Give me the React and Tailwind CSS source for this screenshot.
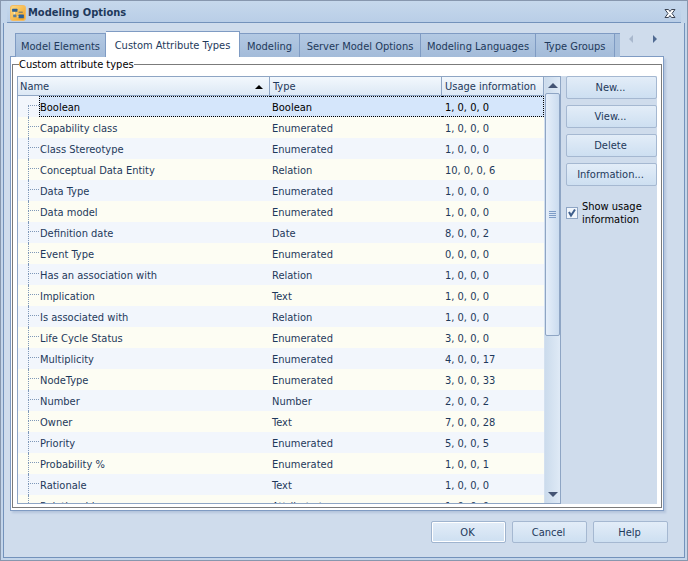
import { useState } from 'react';
import clsx from 'clsx';

const TABS = [
  { label: 'Model Elements', width: 'w-[91px]' },
  { label: 'Custom Attribute Types', width: 'w-[134px]' },
  { label: 'Modeling', width: 'w-[60px]' },
  { label: 'Server Model Options', width: 'w-[121px]' },
  { label: 'Modeling Languages', width: 'w-[115px]' },
  { label: 'Type Groups', width: 'w-[79px]' },
];

const ATTRIBUTES = [
  ['Boolean', 'Boolean', '1, 0, 0, 0'],
  ['Capability class', 'Enumerated', '1, 0, 0, 0'],
  ['Class Stereotype', 'Enumerated', '1, 0, 0, 0'],
  ['Conceptual Data Entity', 'Relation', '10, 0, 0, 6'],
  ['Data Type', 'Enumerated', '1, 0, 0, 0'],
  ['Data model', 'Enumerated', '1, 0, 0, 0'],
  ['Definition date', 'Date', '8, 0, 0, 2'],
  ['Event Type', 'Enumerated', '0, 0, 0, 0'],
  ['Has an association with', 'Relation', '1, 0, 0, 0'],
  ['Implication', 'Text', '1, 0, 0, 0'],
  ['Is associated with', 'Relation', '1, 0, 0, 0'],
  ['Life Cycle Status', 'Enumerated', '3, 0, 0, 0'],
  ['Multiplicity', 'Enumerated', '4, 0, 0, 17'],
  ['NodeType', 'Enumerated', '3, 0, 0, 33'],
  ['Number', 'Number', '2, 0, 0, 2'],
  ['Owner', 'Text', '7, 0, 0, 28'],
  ['Priority', 'Enumerated', '5, 0, 0, 5'],
  ['Probability %', 'Enumerated', '1, 0, 0, 1'],
  ['Rationale', 'Text', '1, 0, 0, 0'],
  ['Relationship', 'Attribute type', '1, 0, 0, 0'],
];

function AppIcon() {
  return (
    <svg width="16" height="16" viewBox="0 0 15 15" className="shrink-0">
      <defs>
        <linearGradient id="appIcon" x1="0" y1="0" x2="1" y2="1">
          <stop offset="0" stopColor="#fbdc8c" />
          <stop offset="1" stopColor="#f2a01c" />
        </linearGradient>
      </defs>
      <rect x="0.5" y="0.5" width="14" height="14" rx="2.5" fill="url(#appIcon)" stroke="#f3bb62" />
      <path d="M4 6v5M7 11h3" stroke="#fff0c0" strokeWidth="1" fill="none" />
      <rect x="2" y="3.4" width="5" height="3" rx="0.5" fill="#2d5f94" />
      <rect x="3" y="9" width="3" height="2.4" rx="0.5" fill="#5b7d99" />
      <rect x="8" y="6" width="4" height="1.6" rx="0.5" fill="#8b8566" />
      <rect x="8" y="9" width="5" height="3.4" rx="0.5" fill="#2d5f94" />
    </svg>
  );
}

function Arrow({ dir, color, small }) {
  const paths = {
    up: 'M0 5L5 0L10 5Z',
    down: 'M0 0L5 5L10 0Z',
    left: 'M5 0L0 5L5 10Z',
    right: 'M0 0L5 5L0 10Z',
  };
  const flat = dir === 'up' || dir === 'down';
  const scale = small ? 0.8 : 1;
  return (
    <svg
      width={(flat ? 10 : 5) * scale}
      height={(flat ? 5 : 10) * scale}
      viewBox={flat ? '0 0 10 5' : '0 0 5 10'}
      className="shrink-0"
    >
      <path d={paths[dir]} fill={color} />
    </svg>
  );
}

function DialogButton({ children, className, primary }) {
  return (
    <button
      type="button"
      className={clsx(
        'flex items-center justify-center rounded-[2px] border bg-linear-to-b from-[#e3edf8] to-[#cddff1] pr-[2px] text-[#1e395b]',
        primary ? 'border-[#9fb4cf] shadow-[inset_0_0_0_1px_#ffffff]' : 'border-[#a5b8d1]',
        className
      )}
    >
      {children}
    </button>
  );
}

function TreeBranch({ first }) {
  return (
    <span className="ml-[10px] flex h-[21px] w-[11px] shrink-0 flex-col">
      <span className={clsx('h-[10px] border-b border-dotted border-[#7f98b8]', !first && 'border-l')} />
      <span className="flex-1 border-l border-dotted border-[#7f98b8]" />
    </span>
  );
}

function AttributeTable({ selected, onSelect }) {
  const head = 'border-b border-[#8ea5c4] bg-linear-to-b from-[#f3f8fd] to-[#dce8f5] p-0 pt-px text-left font-normal';
  return (
    <table className="w-full table-fixed border-separate border-spacing-0 text-[#1e395b]">
      <thead>
        <tr className="h-[19px]">
          <th className={clsx(head, 'border-r pl-[2px]')}>
            <span className="flex items-center justify-between pr-[6px]">
              Name
              <Arrow dir="up" color="#000000" small />
            </span>
          </th>
          <th className={clsx(head, 'w-[172px] border-r pl-[3px]')}>Type</th>
          <th className={clsx(head, 'w-[102px] border-r pl-[3px]')}>Usage information</th>
        </tr>
      </thead>
      <tbody>
        {ATTRIBUTES.map(([name, type, usage], i) => {
          const active = i === selected;
          const cell = active
            ? 'border-y border-dotted border-black bg-[#d5e6fb] text-black'
            : 'border-y border-transparent';
          return (
            <tr
              key={name}
              onClick={() => onSelect(i)}
              className={clsx('h-[21px]', i % 2 ? 'bg-[#fdfdf3]' : 'bg-[#f2f6fc]')}
            >
              <td className="p-0">
                <div className="flex h-[21px]">
                  <TreeBranch first={i === 0} />
                  <span className={clsx('flex flex-1 items-center pt-px', cell, active ? 'border-l' : 'pl-px')}>
                    {name}
                  </span>
                </div>
              </td>
              <td className={clsx('p-0 pt-px pl-[2px]', cell)}>{type}</td>
              <td className={clsx('p-0 pt-px pl-[3px]', cell, active && 'border-r')}>{usage}</td>
            </tr>
          );
        })}
      </tbody>
    </table>
  );
}

function Scrollbar() {
  return (
    <div className="flex w-4 shrink-0 flex-col border-l border-[#d3e0ef] bg-linear-to-r from-[#cbdbec] to-[#dfeaf6]">
      <button type="button" aria-label="Scroll up" className="flex h-4 items-center justify-center">
        <Arrow dir="up" color="#445474" />
      </button>
      <div className="flex h-[57%] items-center justify-center rounded-[2px] border border-[#8ea5c4] bg-linear-to-r from-[#e6effa] to-[#cbdcef]">
        <span className="flex w-[7px] flex-col gap-px">
          <span className="h-px bg-[#7d9cc6]" />
          <span className="h-px bg-[#7d9cc6]" />
          <span className="h-px bg-[#7d9cc6]" />
          <span className="h-px bg-[#7d9cc6]" />
        </span>
      </div>
      <div className="flex-1" />
      <button type="button" aria-label="Scroll down" className="flex h-[18px] items-center justify-center">
        <Arrow dir="down" color="#445474" />
      </button>
    </div>
  );
}

export default function App() {
  const [tab, setTab] = useState(1);
  const [selected, setSelected] = useState(0);
  const [showUsage, setShowUsage] = useState(true);

  return (
    <div className="flex h-screen flex-col border border-[#8797ae] bg-[#c3d5ea] px-[2px] pb-[2px] font-['DejaVu_Sans_Condensed','Noto_Sans',sans-serif] text-[11px] leading-[13px] whitespace-nowrap">
      <header className="mx-1 flex h-[22px] shrink-0 items-center border-b border-[#7392bb] bg-linear-to-b from-[#c6d8ec] to-[#b9cee7] pt-[3px] pr-[5px] pl-[3px]">
        <AppIcon />
        <h1 className="ml-[2px] flex-1 text-[11px] leading-4 font-bold text-[#1e395b]">Modeling Options</h1>
        <button type="button" aria-label="Close">
          <svg width="12" height="11" viewBox="0 0 12 11">
            <path d="M1 1.5H4.5L6 3.5L7.5 1.5H11L8 5.5L11 9.5H7.5L6 7.5L4.5 9.5H1L4 5.5Z" fill="#ffffff" stroke="#3c4453" />
          </svg>
        </button>
      </header>

      <main className="flex min-h-0 flex-1 flex-col border-x border-b border-[#7392bb] bg-[#cfdcec] pr-5 pl-[6px]">
        <div className="flex shrink-0 items-end pt-2" role="tablist">
          <span className="w-[5px] self-stretch border-b border-[#7f9bc3]" />
          {TABS.map(({ label, width }, i) => (
            <button
              key={label}
              type="button"
              role="tab"
              aria-selected={i === tab}
              onClick={() => setTab(i)}
              className={clsx(
                'flex shrink-0 items-center justify-center border-t border-r border-[#7f9bc3] text-[#1e395b]',
                width,
                i === 0 && 'border-l',
                i === tab ? 'h-[26px] bg-white pt-px' : 'h-6 bg-linear-to-b from-[#b3c9e3] to-[#a3bbd9] pt-[2px]'
              )}
            >
              {label}
            </button>
          ))}
          <span className="h-6 w-[5px] border-t border-[#7f9bc3] bg-[#a9c0dc]" />
          <div className="flex h-[26px] flex-1 items-start gap-5 border-b border-[#7f9bc3] pt-1 pl-[9px]">
            <button type="button" aria-label="Previous tabs"><Arrow dir="left" color="#a9b8cd" small /></button>
            <button type="button" aria-label="Next tabs"><Arrow dir="right" color="#506a92" small /></button>
          </div>
        </div>

        <div className="flex min-h-0 flex-1 flex-col border border-t-0 border-[#7f9bc3] bg-white px-px pt-px pb-[2px] shadow-[2px_2px_2px_#b4c5dc]">
          <fieldset className="flex min-h-0 min-w-0 flex-1 flex-col border border-[#7b7b7b] pr-1 pb-[3px] pl-1">
            <legend className="ml-[2px] text-black">Custom attribute types</legend>
            <div className="mt-[5px] flex min-h-0 flex-1 bg-[#cfdcec]">
              <div className="flex min-w-0 flex-1 border border-[#8ea5c4] bg-white">
                <div className="min-w-0 flex-1 overflow-hidden">
                  <AttributeTable selected={selected} onSelect={setSelected} />
                </div>
                <Scrollbar />
              </div>
              <aside className="ml-[5px] flex w-[91px] shrink-0 flex-col gap-[6px]">
                <DialogButton className="h-[23px]">New...</DialogButton>
                <DialogButton className="h-[23px]">View...</DialogButton>
                <DialogButton className="h-[23px]">Delete</DialogButton>
                <DialogButton className="h-[23px]">Information...</DialogButton>
                <label className="mt-2 flex items-center gap-1 whitespace-normal text-black">
                  <span className="grid shrink-0">
                    <input
                      type="checkbox"
                      checked={showUsage}
                      onChange={(e) => setShowUsage(e.target.checked)}
                      className="col-start-1 row-start-1 size-[12px] appearance-none border border-[#8ea5c4] bg-[#f1f6fc]"
                    />
                    {showUsage && (
                      <svg width="12" height="12" viewBox="0 0 12 12" className="pointer-events-none col-start-1 row-start-1">
                        <path d="M3 5L5 8.5L9 2.5" stroke="#3f5f8c" strokeWidth="2" fill="none" />
                      </svg>
                    )}
                  </span>
                  Show usage information
                </label>
              </aside>
            </div>
          </fieldset>
        </div>

        <footer className="-mr-[15px] flex shrink-0 justify-end gap-[6px] pt-[10px] pr-[11px] pb-[14px]">
          <DialogButton primary className="h-[22px] w-[75px]">OK</DialogButton>
          <DialogButton className="h-[22px] w-[75px]">Cancel</DialogButton>
          <DialogButton className="h-[22px] w-[75px]">Help</DialogButton>
        </footer>
      </main>
    </div>
  );
}
